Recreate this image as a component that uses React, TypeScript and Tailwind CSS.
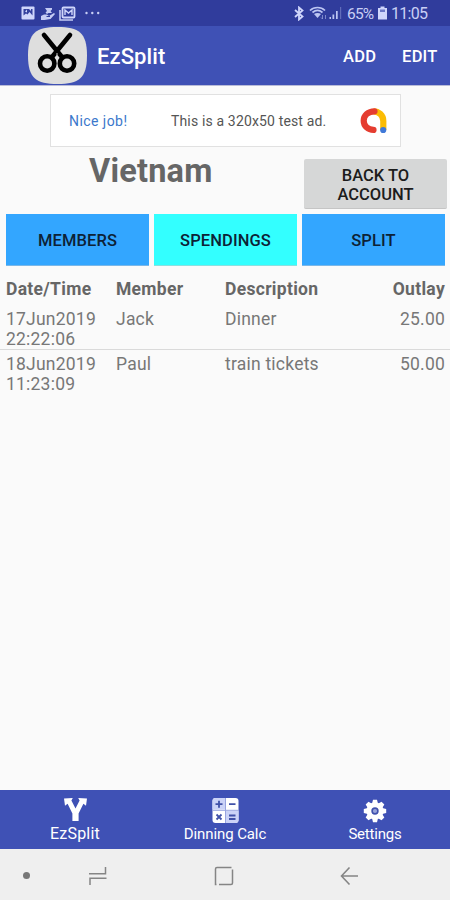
import React from "react";

const spendings = [
  { date: "17Jun2019", time: "22:22:06", member: "Jack", description: "Dinner", outlay: "25.00" },
  { date: "18Jun2019", time: "11:23:09", member: "Paul", description: "train tickets", outlay: "50.00" },
];

function StatusBar() {
  return (
    <div className="flex h-[26px] items-center bg-[#303c9c] text-[#c9cff5]">
      <svg className="ml-[21px] h-[14px] w-[14px] shrink-0" viewBox="0 0 14 14">
        <rect x="0.500" y="0.500" width="13" height="13" rx="1" fill="#d0d6fb" />
        <path d="M2.500 3h9v6.500l-3-3.500-2 2.500-1.500-1-2.500 2z" fill="#35419e" />
        <path d="M4 5.500l2-2v3zM8 3h2v2z" fill="#d0d6fb" />
      </svg>
      <svg className="ml-[6px] h-[15px] w-[14px] shrink-0" viewBox="0 0 14 15" fill="#c4cbf4">
        <path d="M0 10l3-1.500h3l2 1.500 5-3 1 1-4.500 5-6 1H0z" />
        <path d="M4 2h7v1.500L9.500 5 11 7H7.500L6 8 4.500 6.500 6 5z" />
        <path d="M5.500 10.500h3.500" stroke="#303c9c" strokeWidth="1" />
      </svg>
      <svg className="ml-[4px] h-[15px] w-[17px] shrink-0" viewBox="0 0 17 15">
        <path d="M1 4v10h13" fill="none" stroke="#c4cbf4" strokeWidth="1.600" />
        <rect x="3.500" y="1.500" width="12" height="10" rx="1" fill="none" stroke="#d0d6fb" strokeWidth="1.800" />
        <path d="M6 9V4l3.500 3L13 4v5" fill="none" stroke="#d0d6fb" strokeWidth="1.400" />
      </svg>
      <svg className="ml-[9px] h-[4px] w-[15px] shrink-0" viewBox="0 0 15 4" fill="#c9cff5">
        <circle cx="1.500" cy="2" r="1.200" />
        <circle cx="7.300" cy="2" r="1.200" />
        <circle cx="13.200" cy="2" r="1.200" />
      </svg>
      <svg className="ml-[194px] h-[15px] w-[10px] shrink-0" viewBox="0 0 10 15" fill="none" stroke="#d0d6fb" strokeWidth="1.800">
        <path d="M1 4l7.500 6.500L5 13.500v-12l3.500 3L1 11" />
      </svg>
      <svg className="ml-[5px] h-[14px] w-[19px] shrink-0" viewBox="0 0 19 14" fill="none" stroke="#bcc5f2">
        <path d="M1 4.500C5 .5 12 .5 16 4.500M3.500 6.500C6.500 4 10.500 4 13.500 6.500" strokeWidth="1.700" />
        <path d="M5 8c2-1.500 5-1.500 7 0l-3.500 4z" fill="#bcc5f2" stroke="none" />
        <path d="M13.500 9v4m-1.500-1.500l1.500 1.500M16.500 13V9" strokeWidth="1" opacity=".55" />
      </svg>
      <svg className="ml-[1px] h-[14px] w-[14px] shrink-0" viewBox="0 0 14 14" fill="#bcc5f2">
        <rect x="0.500" y="11" width="1.500" height="2" />
        <rect x="3.500" y="8.500" width="1.700" height="4.500" />
        <rect x="7" y="5" width="1.700" height="8" />
        <rect x="11" y="1" width="1.200" height="12" opacity=".35" />
      </svg>
      <span className="ml-[4px] w-[27px] pt-[2px] text-[15.500px] leading-[20px] tracking-[-0.800px]">65%</span>
      <svg className="ml-[3px] h-[14px] w-[11px] shrink-0" viewBox="0 0 11 14">
        <path d="M3.500 0.500h4V2H10v11.500H1V2h2.500z" fill="#d0d6fb" />
        <path d="M3 3.500h5v2.500H3z" fill="#6c78c6" />
      </svg>
      <span className="ml-[3px] pt-[2px] text-[16px] leading-[20px] tracking-[-0.700px]">11:05</span>
    </div>
  );
}

function AppBar() {
  return (
    <header className="flex h-[59px] items-center bg-[#3f51b5] font-medium text-white">
      <svg className="ml-[28px] h-[57px] w-[59px] shrink-0" viewBox="0 0 59 57">
        <path d="M29.500 0C51 0 59 6 59 28.500S51 57 29.500 57 0 51 0 28.500 8 0 29.500 0z" fill="#dedede" />
        <g fill="none" stroke="#000" strokeLinecap="round">
          <path d="M16 8l18 22M42 8L24 30" strokeWidth="4.600" />
          <circle cx="19.200" cy="36.500" r="7.200" strokeWidth="4.600" />
          <circle cx="39" cy="36.500" r="7.200" strokeWidth="4.600" />
        </g>
        <circle cx="29" cy="27" r="0.800" fill="#dedede" />
      </svg>
      <h1 className="ml-[10px] pt-[3px] text-[22px] leading-[28px] tracking-[0.100px]">EzSplit</h1>
      <nav className="ml-auto flex gap-[26px] pr-[12.500px] pt-[3px] text-[16.500px] leading-[20px] tracking-[0.200px]">
        <button>ADD</button>
        <button>EDIT</button>
      </nav>
    </header>
  );
}

function AdBanner() {
  return (
    <aside className="ml-[50px] mt-[8px] flex h-[53px] w-[351px] items-center border border-[#e1e1e1] bg-white text-[14px] leading-[18px] tracking-[0.150px]">
      <span className="ml-[18px] w-[102px] tracking-[0.450px] text-[#3b78cc]">Nice job!</span>
      <span className="w-[189px] whitespace-nowrap text-[#555]">This is a 320x50 test ad.</span>
      <svg className="h-[28px] w-[28px]" viewBox="0 0 28 28" fill="none" strokeWidth="6.200">
        <path d="M13.500 4.300C18.500 4.300 23.300 8 23.300 14V23" stroke="#fbbc04" />
        <path d="M14.500 4.300C8 4.300 3.700 8.500 3.700 13.700S8 22.900 13.500 22.900" stroke="#e53d30" strokeLinecap="round" />
        <circle cx="23.200" cy="23" r="3.100" fill="#4079d8" />
      </svg>
    </aside>
  );
}

function SpendingsTable() {
  return (
    <section className="mt-[13px] text-[17.500px] leading-[20px] tracking-[0.220px] text-[#777]">
      <div className="flex pb-[9px] pl-[6px] pr-[5px] font-bold tracking-[0.300px] text-[#666]">
        <span className="w-[110px]">Date/Time</span>
        <span className="w-[109px]">Member</span>
        <span>Description</span>
        <span className="ml-auto">Outlay</span>
      </div>
      {spendings.map((row) => (
        <div key={row.date} className="flex border-b border-[#dadada] pl-[6px] pr-[5px] pt-[4px] last:border-0 nth-2:pt-[1px]">
          <span className="w-[110px]">
            {row.date}
            <br />
            {row.time}
          </span>
          <span className="w-[109px]">{row.member}</span>
          <span>{row.description}</span>
          <span className="ml-auto">{row.outlay}</span>
        </div>
      ))}
    </section>
  );
}

function BottomTabs() {
  return (
    <nav className="grid h-[59px] shrink-0 grid-cols-3 bg-[#3f51b5] text-white">
      <div className="flex flex-col items-center pt-[7px]">
        <svg className="h-[25px] w-[25px]" viewBox="0 0 25 25" fill="#fff">
          <path d="M1 1.500L9.800 1 8.400 3.600 12.500 11.500 16.600 3.600 15.200 1 24 1.500 23 8.800 20.400 6.800 15.600 16.500V24H9.400V16.500L4.600 6.800 2 8.800z" />
        </svg>
        <span className="mt-[1px] text-[16px] leading-[22px] tracking-[0.200px]">EzSplit</span>
      </div>
      <div className="flex flex-col items-center pt-[7px]">
        <svg className="h-[27px] w-[27px]" viewBox="0 0 27 27">
          <rect x="0.500" y="1" width="26" height="25" rx="3" fill="#fff" />
          <path d="M.5 12.500V4q0-3 3-3H13v11.500zM14 14h12.500v9q0 3-3 3H14z" fill="#cbd3f7" />
          <path d="M13.500 1v25M.5 13.300h26" stroke="#98a4df" strokeWidth="1" />
          <path d="M3.500 7.200h7M7 3.700v7M17 7.200h6.500M4.500 17.500l5 5m0-5l-5 5M17 18.500h6.500M17 22h6.500" stroke="#4051a8" strokeWidth="1.800" />
        </svg>
        <span className="mt-[-1px] text-[15px] leading-[22px] tracking-[-0.100px]">Dinning Calc</span>
      </div>
      <div className="flex flex-col items-center pt-[9px]">
        <svg className="h-[24px] w-[24px]" viewBox="0 0 24 24">
          <g fill="#fff">
            <circle cx="12" cy="12" r="8.500" />
            <path id="tooth" d="M10 .8h4l1 4H9zM10 23.200h4l1-4H9z" />
            <use href="#tooth" transform="rotate(45 12 12)" />
            <use href="#tooth" transform="rotate(90 12 12)" />
            <use href="#tooth" transform="rotate(135 12 12)" />
          </g>
          <circle cx="12" cy="12" r="2.900" fill="#98a3da" stroke="#4051ad" strokeWidth="1.600" />
        </svg>
        <span className="text-[15px] leading-[22px] tracking-[-0.200px]">Settings</span>
      </div>
    </nav>
  );
}

function SystemNavigation() {
  return (
    <div className="flex h-[51px] shrink-0 items-center bg-[#efefef] text-[#858585]">
      <span className="ml-[23px] mt-[2px] h-[7px] w-[7px] rounded-full bg-[#777]" />
      <svg className="ml-[58px] mt-[2px] h-[20px] w-[20px]" viewBox="0 0 20 20" fill="none" stroke="currentColor" strokeWidth="1.500">
        <path d="M1 7.800h16.500V1M18.500 12.200H2V19" />
      </svg>
      <svg className="ml-[106px] mt-[2px] h-[20px] w-[20px]" viewBox="0 0 20 20" fill="none" stroke="currentColor" strokeWidth="1.500">
        <path d="M2.500 18.500H1.500V3q0-1.500 1.500-1.500h14.500M18.500 3.500V17q0 1.500-1.500 1.500H5" />
      </svg>
      <svg className="ml-[106px] mt-[2px] h-[20px] w-[19px]" viewBox="0 0 19 20" fill="none" stroke="currentColor" strokeWidth="1.600">
        <path d="M9.500 1.500L1.500 10l8 8.500M1.500 10H18" />
      </svg>
    </div>
  );
}

export default function App() {
  return (
    <div className="flex h-[900px] w-[450px] flex-col overflow-hidden bg-[#fafafa] font-['Roboto','Liberation_Sans',sans-serif]">
      <StatusBar />
      <AppBar />
      <main className="flex-1 border-t border-[#b9bcd8]">
        <AdBanner />
        <div className="flex">
          <h2 className="w-[304px] pl-[89px] pt-[5px] text-[32.500px] font-bold leading-[38px] tracking-[0.200px] text-[#666]">Vietnam</h2>
          <button className="mt-[12px] h-[50px] w-[143px] rounded-[2px] border-b border-[#c5c5c5] bg-[#d6d7d7] pt-[3px] text-[16.500px] font-medium leading-[19px] text-[#1c1c1c]">
            BACK TO
            <br />
            ACCOUNT
          </button>
        </div>
        <div className="mt-[5px] flex gap-[5px] pl-[6px] pr-[5px] text-[16.500px] font-medium tracking-[0.100px] text-[#0d2236]">
          <button className="h-[52px] flex-1 border-b border-[#7ab7e8] bg-[#33a6ff] pt-[3px]">MEMBERS</button>
          <button className="h-[52px] flex-1 border-b border-[#8be0e0] bg-[#33ffff] pt-[3px]">SPENDINGS</button>
          <button className="h-[52px] flex-1 border-b border-[#7ab7e8] bg-[#33a6ff] pt-[3px]">SPLIT</button>
        </div>
        <SpendingsTable />
      </main>
      <BottomTabs />
      <SystemNavigation />
    </div>
  );
}
